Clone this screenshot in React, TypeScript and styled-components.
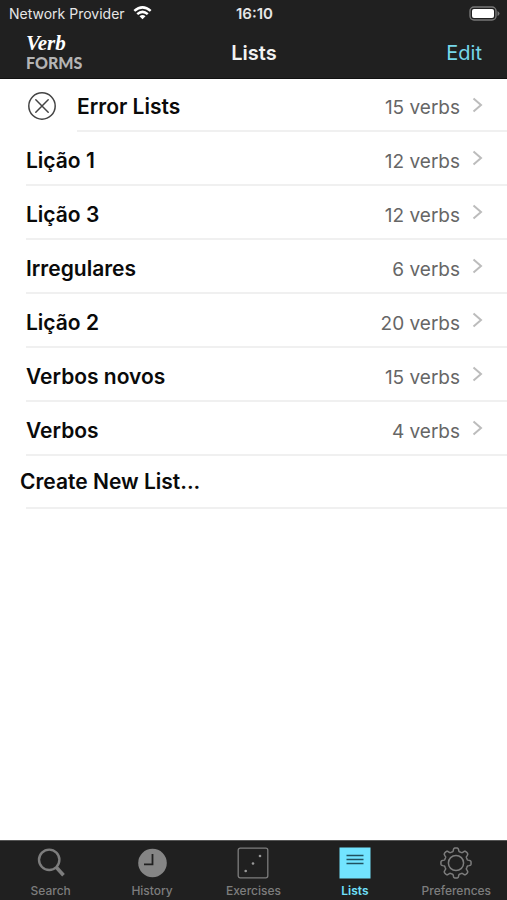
import React from "react";
import styled, { createGlobalStyle } from "styled-components";

const GlobalStyle = createGlobalStyle`
  *, *::before, *::after { box-sizing: border-box; }
  body {
    margin: 0;
    background: #fff;
    color: #0a0a0a;
    font-family: Inter, "Liberation Sans", sans-serif;
  }
  button { font: inherit; border: 0; background: none; padding: 0; cursor: pointer; }
  a { color: inherit; text-decoration: none; }
`;

const Screen = styled.div`
  display: flex;
  flex-direction: column;
  min-height: 100vh;
`;

const TopBar = styled.header`
  background: #202020;
  border-bottom: 1px solid #111;
`;

const StatusBar = styled.div`
  display: grid;
  grid-template-columns: 1fr auto 1fr;
  align-items: center;
  height: 27px;
  padding: 0 7px 0 9px;
  color: #e6e6e6;
  font-size: 14px;
`;

const Carrier = styled.div`
  display: flex;
  align-items: center;
  gap: 8px;
  white-space: nowrap;
`;

const Clock = styled.time`
  font-size: 15px;
  font-weight: 600;
`;

const Battery = styled.svg`
  justify-self: end;
`;

const NavBar = styled.div`
  display: grid;
  grid-template-columns: 1fr auto 1fr;
  align-items: center;
  height: 51px;
  padding: 0 25px 0 26px;
`;

const Logo = styled.div`
  display: flex;
  flex-direction: column;
`;

const LogoScript = styled.span`
  color: #fff;
  font: italic bold 21px/19px "Liberation Serif", serif;
`;

const LogoBlock = styled.span`
  color: #b4b4b4;
  font: 900 16px/19px Lato, "Liberation Sans", sans-serif;
`;

const Title = styled.h1`
  margin: 0;
  color: #f2f2f2;
  font-size: 20px;
  font-weight: 600;
`;

const EditButton = styled.button`
  justify-self: end;
  color: #76d7ea;
  font-size: 20px;
`;

const Lists = styled.ul`
  flex: 1;
  margin: 0;
  padding: 0;
  list-style: none;
`;

const Item = styled.li<{ $short?: boolean }>`
  display: flex;
  height: ${(p) => (p.$short ? 53 : 54)}px;
  padding-left: 26px;
`;

const Lead = styled.span`
  display: flex;
  align-items: center;
  width: 51px;
`;

const RowLink = styled.a`
  display: flex;
  flex: 1;
  align-items: center;
  border-bottom: 2px solid #f0f0f0;
  padding-right: 24px;
`;

const Name = styled.span`
  flex: 1;
  padding-top: 4px;
  font-size: 21px;
  font-weight: 600;
`;

const Count = styled.span`
  margin-right: 12px;
  padding-top: 6px;
  color: #666;
  font-size: 19px;
`;

const CreateButton = styled.button`
  flex: 1;
  border-bottom: 2px solid #f0f0f0;
  color: #0a0a0a;
  font-size: 21px;
  font-weight: 600;
  text-align: left;
  text-indent: -6px;
`;

const TabBar = styled.nav`
  position: sticky;
  bottom: 0;
  display: grid;
  grid-template-columns: repeat(5, 1fr);
  height: 60px;
  border-top: 1px solid #555;
  background: #202020;
`;

const Tab = styled.a<{ $active?: boolean }>`
  display: flex;
  flex-direction: column;
  align-items: center;
  gap: 4px;
  padding-top: 6px;
  color: ${(p) => (p.$active ? "#70e0fc" : "#7d7d7d")};
  font-size: 12px;
  font-weight: ${(p) => (p.$active ? 600 : 500)};
  line-height: 16px;
`;

const WifiIcon = () => (
  <svg width="19" height="16" viewBox="0 0 20 17" fill="none" stroke="#fff" strokeWidth="2.7" aria-hidden="true">
    <path d="M1.3 5.2Q10-2.2 18.7 5.2M4.4 8.6Q10 3.8 15.6 8.6" />
    <path d="M10 14 6.8 10.8Q10 8.3 13.2 10.8Z" fill="#fff" stroke="none" />
  </svg>
);

const BatteryIcon = () => (
  <Battery width="31" height="15" viewBox="0 0 31 15" role="img" aria-label="Battery full">
    <rect x="1" y="1" width="26" height="13" rx="4" fill="none" stroke="#777" strokeWidth="1.4" />
    <rect x="3" y="3" width="22" height="9" rx="2" fill="#fff" />
    <path d="M28.5 5q2 1 2 2.5t-2 2.5z" fill="#777" />
  </Battery>
);

const ErrorIcon = () => (
  <svg width="31" height="30" viewBox="0 0 31 30" fill="none" stroke="#444" strokeWidth="1.5" strokeLinecap="round" aria-hidden="true">
    <circle cx="16" cy="15" r="13.2" />
    <path d="m9.8 8.8 12.4 12.4m0-12.4L9.8 21.2" />
  </svg>
);

const Chevron = () => (
  <svg width="11" height="16" viewBox="0 0 11 16" fill="none" stroke="#bcbcbc" strokeWidth="2" aria-hidden="true">
    <path d="m1.5 1.5 7.5 6.5-7.5 6.5" />
  </svg>
);

const SearchIcon = () => (
  <svg width="32" height="32" viewBox="0 0 32 32" fill="none" stroke="currentColor" aria-hidden="true">
    <circle cx="14.2" cy="12.8" r="10.2" strokeWidth="2.4" />
    <path d="m21.5 20.5 7 7.7" strokeWidth="3.6" />
  </svg>
);

const HistoryIcon = () => (
  <svg width="32" height="32" viewBox="0 0 32 32" aria-hidden="true">
    <circle cx="16.5" cy="16" r="14.3" fill="#858585" />
    <path d="M16.5 7v10.3H8" fill="none" stroke="#202020" strokeWidth="1.8" />
  </svg>
);

const ExercisesIcon = () => (
  <svg width="32" height="32" viewBox="0 0 32 32" aria-hidden="true">
    <rect x="1.2" y="1.2" width="29.6" height="29.6" rx="2" fill="none" stroke="currentColor" strokeWidth="1.3" />
    <g fill="#999">
      <circle cx="23" cy="9" r="1.3" />
      <circle cx="16" cy="16.5" r="1.3" />
      <circle cx="8.7" cy="24" r="1.3" />
    </g>
  </svg>
);

const ListsIcon = () => (
  <svg width="32" height="32" viewBox="0 0 32 32" aria-hidden="true">
    <path d="M.5.5h31v31H.5z" fill="#72e4ff" />
    <path d="M7.5 8.5h17m-17 4h17m-17 4h17" stroke="#205260" strokeWidth="1.5" />
  </svg>
);

const gearPath = (() => {
  const points: string[] = [];
  for (let i = 0; i <= 160; i++) {
    const angle = (i / 160) * Math.PI * 2;
    const wave = Math.cos(angle * 8);
    const radius = 13.4 + 1.7 * Math.tanh(wave * 2.5);
    points.push(`${(16 + radius * Math.sin(angle)).toFixed(2)} ${(16 - radius * Math.cos(angle)).toFixed(2)}`);
  }
  return `M${points.join("L")}Z`;
})();

const GearIcon = () => (
  <svg width="32" height="32" viewBox="0 0 32 32" fill="none" stroke="currentColor" strokeWidth="1.5" strokeLinejoin="round" aria-hidden="true">
    <path d={gearPath} />
    <circle cx="16" cy="16" r="7.6" />
  </svg>
);

const lists = [
  { name: "Error Lists", count: 15, errors: true },
  { name: "Lição 1", count: 12 },
  { name: "Lição 3", count: 12 },
  { name: "Irregulares", count: 6 },
  { name: "Lição 2", count: 20 },
  { name: "Verbos novos", count: 15 },
  { name: "Verbos", count: 4 },
];

const tabs = [
  { label: "Search", Icon: SearchIcon },
  { label: "History", Icon: HistoryIcon },
  { label: "Exercises", Icon: ExercisesIcon },
  { label: "Lists", Icon: ListsIcon },
  { label: "Preferences", Icon: GearIcon },
];

export default function App() {
  return (
    <Screen>
      <GlobalStyle />
      <TopBar>
        <StatusBar>
          <Carrier>
            Network Provider
            <WifiIcon />
          </Carrier>
          <Clock>16:10</Clock>
          <BatteryIcon />
        </StatusBar>
        <NavBar>
          <Logo>
            <LogoScript>Verb</LogoScript>
            <LogoBlock>FORMS</LogoBlock>
          </Logo>
          <Title>Lists</Title>
          <EditButton type="button">Edit</EditButton>
        </NavBar>
      </TopBar>
      <Lists>
        {lists.map(({ name, count, errors }) => (
          <Item key={name} $short={errors}>
            {errors && (
              <Lead>
                <ErrorIcon />
              </Lead>
            )}
            <RowLink href="#list">
              <Name>{name}</Name>
              <Count>{count} verbs</Count>
              <Chevron />
            </RowLink>
          </Item>
        ))}
        <Item $short>
          <CreateButton type="button">Create New List...</CreateButton>
        </Item>
      </Lists>
      <TabBar>
        {tabs.map(({ label, Icon }) => {
          const active = label === "Lists";
          return (
            <Tab key={label} href="#tab" $active={active} aria-current={active ? "page" : undefined}>
              <Icon />
              {label}
            </Tab>
          );
        })}
      </TabBar>
    </Screen>
  );
}
